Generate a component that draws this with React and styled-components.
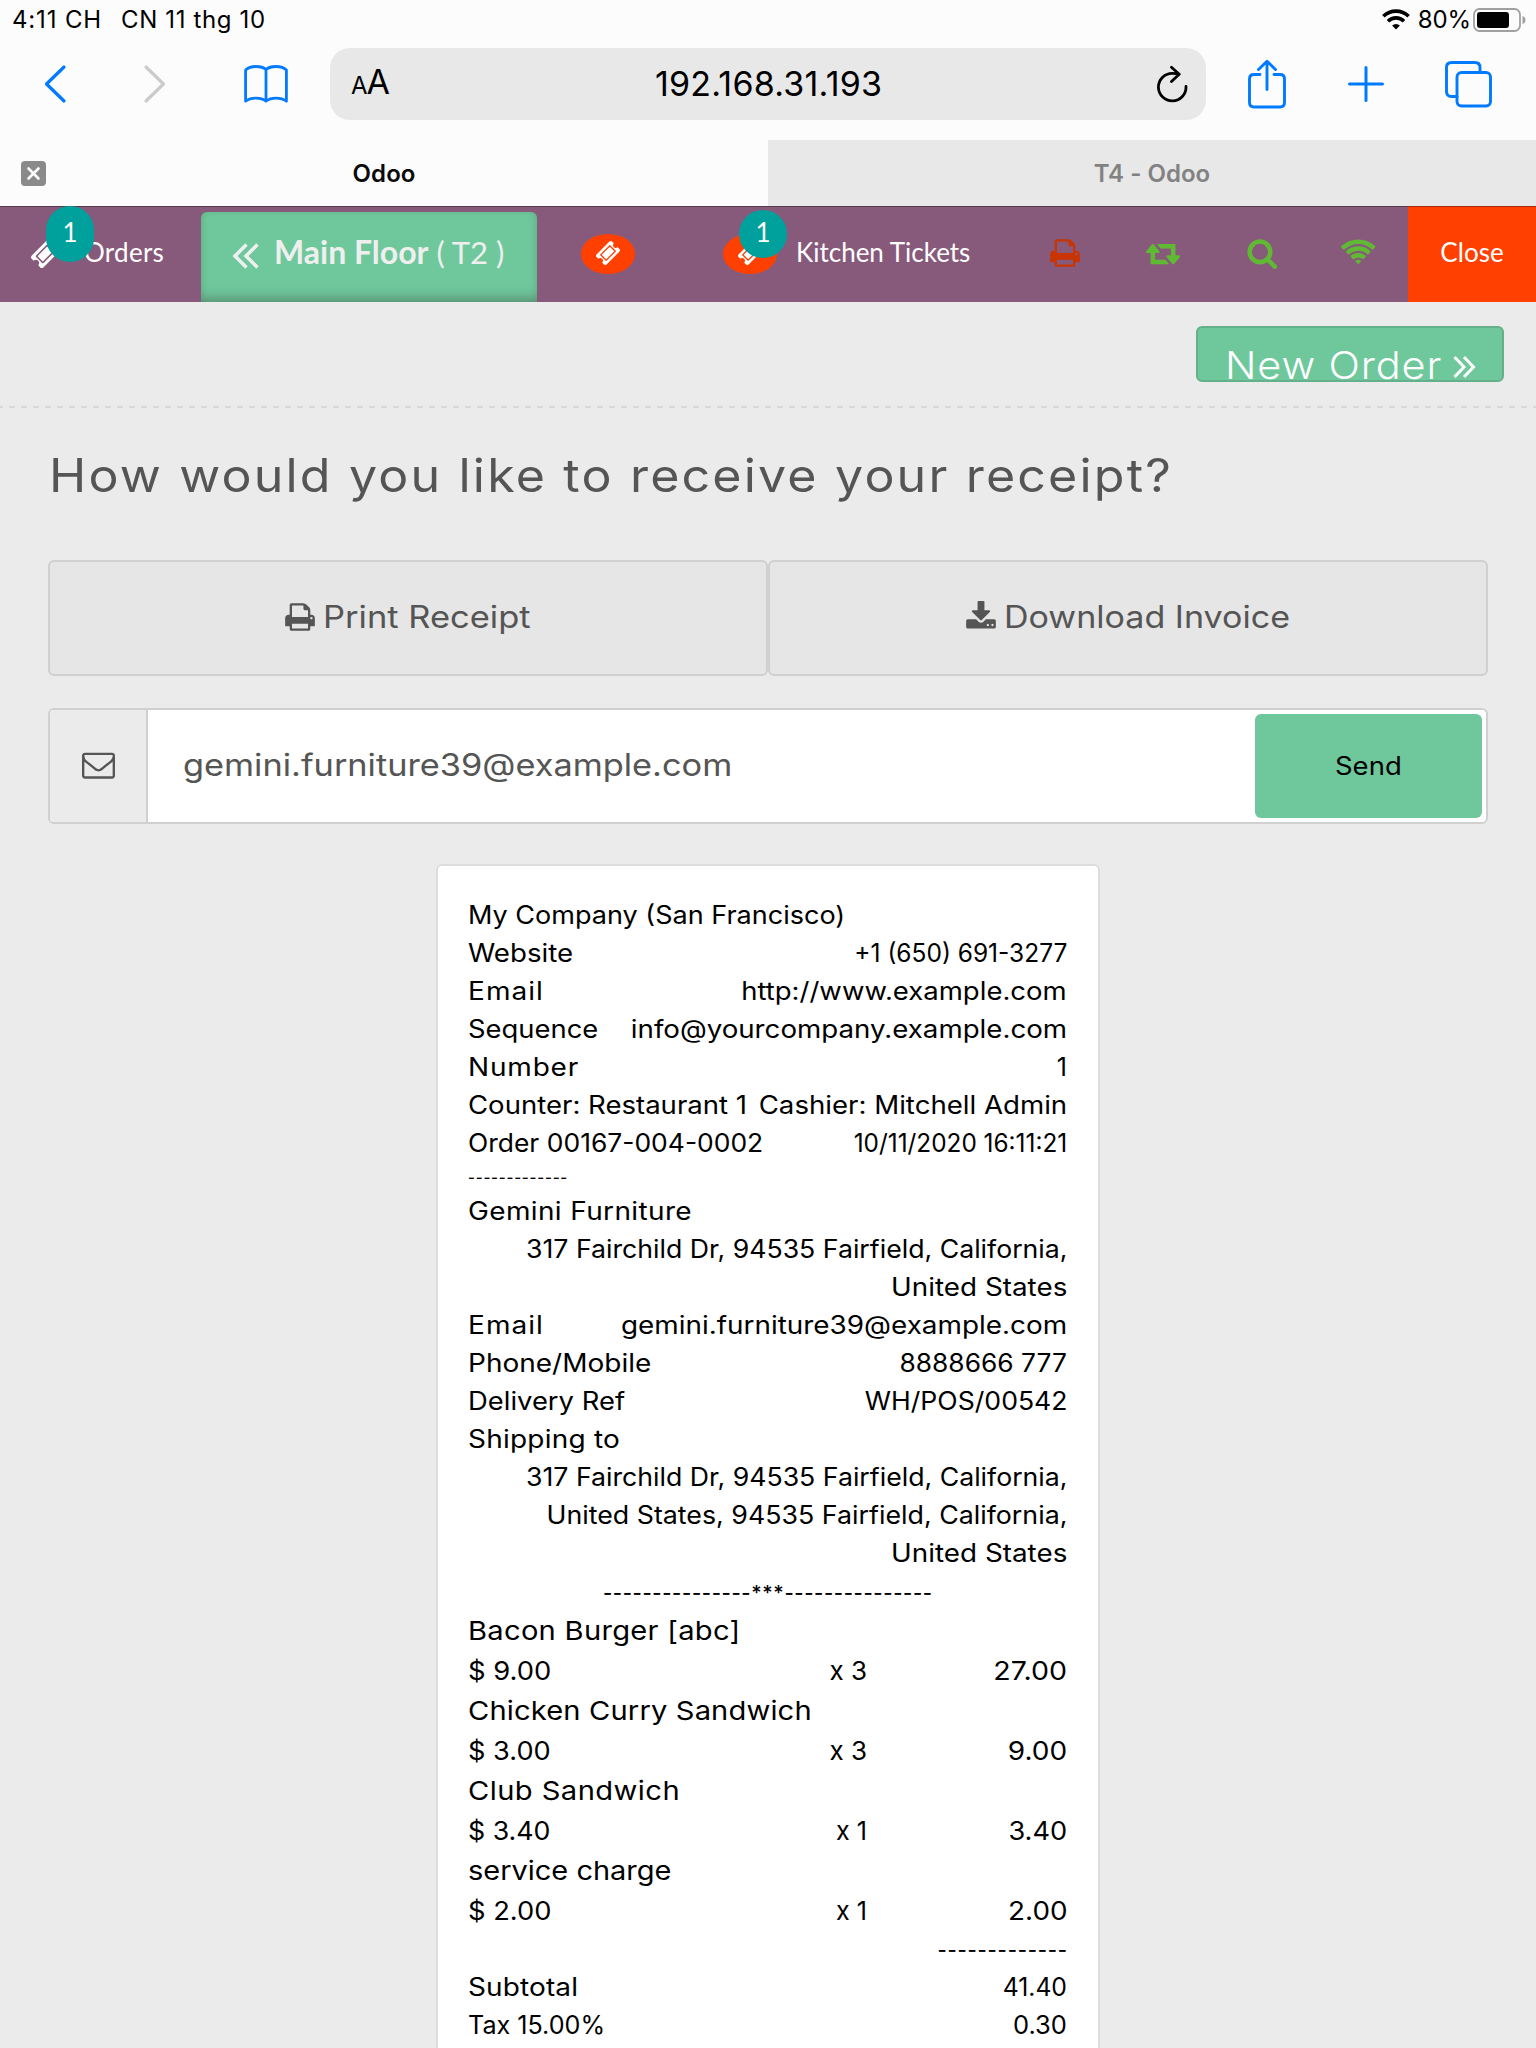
import React from "react";
import styled, { createGlobalStyle } from "styled-components";

const sans = `"Inter", "Liberation Sans", sans-serif`;
const lato = `"Lato", "Liberation Sans", sans-serif`;
const green = "#6fc89c";
const teal = "#00a09d";
const orange = "#ff4000";
const blue = "#007aff";

const GlobalStyle = createGlobalStyle`
  * { box-sizing: border-box; }
  body { margin: 0; background: #ebebeb; font-family: ${sans}; color: #000; }
`;

const Screen = styled.div`
  width: 1536px;
  height: 2048px;
  overflow: hidden;
  display: flex;
  flex-direction: column;
  background: #ebebeb;
`;

/* $sx widens the letter forms, $ls opens the tracking */
const Label = styled.span`
  display: inline-block;
  white-space: pre;
  letter-spacing: ${(p) => p.$ls || 0}px;
  margin-right: ${(p) => (p.$mr || 0) - (p.$ls || 0)}px;
  transform: scaleX(${(p) => p.$sx || 1});
  transform-origin: ${(p) => p.$from || "left"} center;
`;

/* ---------- device and browser chrome ---------- */

const StatusBar = styled.div`
  height: 39px;
  flex: none;
  padding: 0 9px 0 12px;
  display: flex;
  align-items: center;
  font-size: 24px;
  background: #fcfcfc;
`;
const Clock = styled.div`
  width: 109px;
`;
const StatusRight = styled.div`
  margin-left: auto;
  display: flex;
  align-items: center;
`;
const BatteryText = styled.div`
  margin: 0 2px 0 8px;
`;

const BrowserBar = styled.div`
  height: 101px;
  flex: none;
  padding: 9px 0 0 0;
  display: flex;
  align-items: flex-start;
  background: #fcfcfc;
`;
const ToolSlot = styled.div`
  width: ${(p) => p.$w}px;
  height: 72px;
  display: flex;
  align-items: center;
  justify-content: center;
  svg { display: block; overflow: visible; }
`;
const AddressBar = styled.div`
  width: 876px;
  height: 72px;
  padding: 0 17px 0 21px;
  border-radius: 20px;
  background: #e8e8e8;
  display: grid;
  grid-template-columns: 60px 1fr 32px;
  align-items: center;
`;
const ReaderMark = styled.div`
  font-size: 34px;
  line-height: 42px;
  white-space: nowrap;
  letter-spacing: -1px;
  small { font-size: 24px; }
`;
const Url = styled.div`
  font-size: 34px;
  line-height: 40px;
  text-align: center;
  padding-right: 31px;
`;

const TabStrip = styled.div`
  height: 66px;
  flex: none;
  display: grid;
  grid-template-columns: 1fr 1fr;
`;
const Tab = styled.div`
  position: relative;
  display: flex;
  align-items: center;
  justify-content: center;
  font-size: 24px;
  font-weight: 600;
  background: ${(p) => (p.$active ? "#fcfcfc" : "#e8e8e8")};
  color: ${(p) => (p.$active ? "#0a0a0a" : "#828282")};
`;
const TabClose = styled.div`
  position: absolute;
  left: 21px;
  top: 21px;
  width: 25px;
  height: 25px;
  border-radius: 4px;
  background: #8a8a8a;
  svg { display: block; }
`;

/* ---------- point of sale header ---------- */

const NavBar = styled.div`
  height: 96px;
  flex: none;
  display: flex;
  background: #875a7b;
  box-shadow: inset 0 1px 0 rgba(0, 0, 0, 0.35);
  font-family: ${lato};
  font-size: 26px;
  color: #fff;
`;
const OrdersItem = styled.div`
  position: relative;
  width: 201px;
  padding: 0 0 5px 31px;
  display: flex;
  align-items: center;
  gap: 25px;
  svg { margin-top: 4px; }
`;
const Badge = styled.div`
  position: absolute;
  left: ${(p) => p.$x}px;
  top: ${(p) => p.$y}px;
  width: 48px;
  height: ${(p) => p.$h}px;
  border-radius: 24px;
  background: ${teal};
  line-height: ${(p) => p.$lh}px;
  text-align: center;
`;
const FloorButton = styled.div`
  width: 336px;
  height: 90px;
  margin-top: 6px;
  padding: 0 0 11px 31px;
  border-radius: 6px 6px 0 0;
  background: ${green};
  box-shadow: inset 0 -10px 14px -7px rgba(60, 60, 60, 0.42),
    inset 0 0 6px rgba(60, 80, 60, 0.14);
  display: flex;
  align-items: center;
  color: #efefef;
  svg { margin: 8px 14px 0 0; flex: none; }
`;
const FloorName = styled.div`
  font-size: 32px;
  font-weight: 700;
  white-space: nowrap;
`;
const TableName = styled.div`
  margin-left: 8px;
  font-size: 31px;
  white-space: nowrap;
`;
const TicketItem = styled.div`
  position: relative;
  display: flex;
  align-items: center;
  margin-left: ${(p) => p.$ml}px;
  gap: 19px;
  padding-bottom: 5px;
`;
const Oval = styled.div`
  width: 54px;
  height: 40px;
  margin-top: 5px;
  border-radius: 50%;
  background: ${orange};
  display: flex;
  align-items: center;
  justify-content: center;
  svg { margin-top: -2px; }
`;
const IconRow = styled.div`
  margin-left: auto;
  display: flex;
`;
const IconCell = styled.div`
  width: 98px;
  padding-bottom: 3px;
  display: flex;
  align-items: center;
  justify-content: center;
  color: ${(p) => p.$color};
`;
const CloseButton = styled.div`
  width: 128px;
  padding-bottom: 5px;
  display: flex;
  align-items: center;
  justify-content: center;
  background: ${orange};
  box-shadow: inset 0 1px 0 rgba(0, 0, 0, 0.35);
`;

/* ---------- receipt screen ---------- */

const OrderBar = styled.div`
  height: 106px;
  flex: none;
  padding: 24px 32px 0 0;
  display: flex;
  justify-content: flex-end;
  align-items: flex-start;
  background: repeating-linear-gradient(90deg, #d8d8d8 0 6px, transparent 6px 12px) -3px 104px / 1560px 2px no-repeat;
`;
const NewOrder = styled.div`
  width: 308px;
  height: 56px;
  padding: 23px 0 0 27px;
  border: 2px solid #63b08a;
  border-radius: 6px;
  background: ${green};
  display: flex;
  align-items: flex-start;
  font-size: 38px;
  font-weight: 300;
  line-height: 29px;
  color: #fff;
  svg { margin: 4px 0 0 29px; }
`;
const Title = styled.h1`
  margin: 36px 0 0 49px;
  height: 116px;
  flex: none;
  font-size: 46px;
  line-height: 62px;
  font-weight: 400;
  color: #555;
`;
const Actions = styled.div`
  flex: none;
  margin: 0 48px;
  height: 116px;
  display: grid;
  grid-template-columns: 1fr 1fr;
`;
const ActionButton = styled.div`
  border: 2px solid #d0d0d0;
  border-radius: 6px;
  background: #e6e6e6;
  display: flex;
  align-items: center;
  justify-content: center;
  padding: 0 1px 3px 0;
  gap: 7px;
  font-size: 31px;
  color: #555;
`;
const EmailBox = styled.div`
  flex: none;
  height: 116px;
  margin: 32px 48px 0;
  border: 2px solid #d0d0d0;
  border-radius: 6px;
  background: #fff;
  overflow: hidden;
  display: flex;
`;
const EmailIcon = styled.div`
  width: 98px;
  border-right: 2px solid #d0d0d0;
  background: #ebebeb;
  color: #555;
  display: flex;
  align-items: center;
  justify-content: center;
  padding-bottom: 3px;
`;
const EmailValue = styled.div`
  flex: 1;
  padding: 0 0 3px 35px;
  display: flex;
  align-items: center;
  font-size: 31px;
  color: #555;
`;
const SendButton = styled.div`
  width: 227px;
  height: 104px;
  margin: 4px 4px 0 0;
  border-radius: 6px;
  background: ${green};
  display: flex;
  align-items: center;
  justify-content: center;
  font-size: 25px;
`;

const Receipt = styled.div`
  flex: none;
  width: 664px;
  height: 1300px;
  margin: 40px auto 0;
  padding: 30px 31px 30px 30px;
  border: 2px solid #ddd;
  border-radius: 6px;
  background: #fff;
  font-size: 25px;
  line-height: 38px;
`;
const Row = styled.div`
  height: 38px;
  display: flex;
  justify-content: ${(p) => (p.$end ? "flex-end" : "space-between")};
`;
const Rule = styled.div`
  height: ${(p) => p.$h}px;
  display: flex;
  justify-content: ${(p) => p.$align};
  align-items: center;
  padding-top: ${(p) => p.$pt || 0}px;
  font-size: ${(p) => p.$size}px;
  font-weight: 500;
`;
const Product = styled.div`
  height: 80px;
  font-size: 26px;
  line-height: 40px;
`;
const ProductLine = styled.div`
  height: 40px;
`;
const ProductPrice = styled.div`
  height: 40px;
  display: grid;
  grid-template-columns: 200px 199px 200px;
`;
const Cell = styled.div`
  text-align: ${(p) => p.$align || "left"};
`;

/* ---------- icons ---------- */

const shapes = {
  print: ["0 0 1792 1792", "M448 1536h896v-256h-896v256zm0-640h896v-384h-160q-40 0-68-28t-28-68v-160h-640v640zm1152 64q0-26-19-45t-45-19-45 19-19 45 19 45 45 19 45-19 19-45zm128 0v416q0 13-9.5 22.5t-22.5 9.5h-224v160q0 40-28 68t-68 28h-960q-40 0-68-28t-28-68v-160h-224q-13 0-22.5-9.5t-9.5-22.5v-416q0-79 56.5-135.5t135.5-56.5h64v-544q0-40 28-68t68-28h672q40 0 88 20t76 48l152 152q28 28 48 76t20 88v256h64q79 0 135.5 56.5t56.5 135.5z"],
  download: ["0 0 1792 1792", "M1344 1344q0-26-19-45t-45-19-45 19-19 45 19 45 45 19 45-19 19-45zm256 0q0-26-19-45t-45-19-45 19-19 45 19 45 45 19 45-19 19-45zm128-224v320q0 40-28 68t-68 28h-1472q-40 0-68-28t-28-68v-320q0-40 28-68t68-28h465l135 136q58 56 136 56t136-56l136-136h464q40 0 68 28t28 68zm-325-569q17 41-14 70l-448 448q-18 19-45 19t-45-19l-448-448q-31-29-14-70 17-39 59-39h256v-448q0-26 19-45t45-19h256q26 0 45 19t19 45v448h256q42 0 59 39z"],
  search: ["-70 0 1792 1792", "M1216 832q0-185-131.5-316.5t-316.5-131.5-316.5 131.5-131.5 316.5 131.5 316.5 316.5 131.5 316.5-131.5 131.5-316.5zm512 832q0 52-38 90t-90 38q-54 0-90-38l-343-342q-179 124-399 124-143 0-273.5-55.5t-225-150-150-225-55.5-273.5 55.5-273.5 150-225 225-150 273.5-55.5 273.5 55.5 225 150 150 225 55.5 273.5q0 220-124 399l343 343q37 37 37 90z"],
  retweet: ["0 0 1920 1792", "M1280 1504q0 13-9.5 22.5t-22.5 9.5h-960q-8 0-13.5-2t-9-7-5.5-8-3-11.5-1-11.5v-600h-192q-26 0-45-19t-19-45q0-24 15-41l320-384q19-22 49-22t49 22l320 384q15 17 15 41 0 26-19 45t-45 19h-192v384h576q16 0 25 11l160 192q7 10 7 21zm640-416q0 24-15 41l-320 384q-20 23-49 23t-49-23l-320-384q-15-17-15-41 0-26 19-45t45-19h192v-384h-576q-16 0-25-12l-160-192q-7-9-7-20 0-13 9.5-22.5t22.5-9.5h960q8 0 13.5 2t9 7 5.5 8 3 11.5 1 11.5v600h192q26 0 45 19t19 45z"],
  wifi: ["140 10 2048 1792", "M1120 1533q-20 0-93-73.5t-73-93.5q0-32 62.5-54t103.5-22 103.5 22 62.5 54q0 20-73 93.5t-93 73.5zm270-271q-2 0-40-25t-101.5-50-128.5-25-128.5 25-101 50-40.5 25q-18 0-93.5-75t-75.5-93q0-13 10-23 78-77 196-121t233-44 233 44 196 121q10 10 10 23 0 18-75.5 93t-93.5 75zm273-272q-11 0-23-8-136-105-252-154.5t-268-49.5q-85 0-170.5 22t-149 53-113.5 62-79 53-31 22q-17 0-92-75t-75-93q0-12 10-22 132-132 320-205t380-73 380 73 320 205q10 10 10 22 0 18-75 93t-92 75zm271-271q-11 0-22-9-179-157-371.5-236.5t-420.5-79.5-420.5 79.5-371.5 236.5q-11 9-22 9-17 0-92.5-75t-75.5-93q0-13 10-23 187-186 445-288t527-102 527 102 445 288q10 10 10 23 0 18-75.5 93t-92.5 75z"],
  ticket: ["54 54 1684 1684", "M1024 452l316 316-572 572-316-316zm-211 979l618-618q19-19 19-45t-19-45l-362-362q-18-18-45-18t-45 18l-618 618q-19 19-19 45t19 45l362 362q18 18 45 18t45-18zm889-637l-907 908q-37 37-90.5 37t-90.5-37l-126-126q56-56 56-136t-56-136-136-56-136 56l-125-126q-37-37-37-90.5t37-90.5l907-906q37-37 90.5-37t90.5 37l125 125q-56 56-56 136t56 136 136 56 136-56l126 125q37 37 37 90.5t-37 90.5z"],
  envelope: ["0 0 1792 1792", "M1664 1504v-768q-32 36-69 66-268 206-426 338-51 43-83 67t-86.5 48.5-102.5 24.5h-2q-48 0-102.5-24.5t-86.5-48.5-83-67q-158-132-426-338-37-30-69-66v768q0 13 9.5 22.5t22.5 9.5h1472q13 0 22.5-9.5t9.5-22.5zm0-1051v-24.5l-.5-13-3-12.5-5.5-9-9-7.5-14-2.5h-1472q-13 0-22.5 9.5t-9.5 22.5q0 168 147 284 193 152 401 317 6 5 35 29.5t46 37.5 44.5 31.5 50.5 27.5 43 9h2q20 0 43-9t50.5-27.5 44.5-31.5 46-37.5 35-29.5q208-165 401-317 54-43 100.5-115.5t46.5-131.5zm128-37v1088q0 66-47 113t-113 47h-1472q-66 0-113-47t-47-113v-1088q0-66 47-113t113-47h1472q66 0 113 47t47 113z"],
};

const Icon = ({ name, w = 32, h = 32 }) => (
  <svg width={w} height={h} viewBox={shapes[name][0]} fill="currentColor">
    <path d={shapes[name][1]} />
  </svg>
);

const Line = ({ w, h, color = blue, sw = 3, children }) => (
  <svg width={w} height={h} viewBox={`0 0 ${w} ${h}`} fill="none" stroke={color} strokeWidth={sw} strokeLinecap="round" strokeLinejoin="round">
    {children}
  </svg>
);

const StatusWifi = () => (
  <svg width="28" height="21" viewBox="0 0 28 21" fill="none" stroke="#000" strokeWidth="3.6">
    <path d="M1.4 7.3a18 18 0 0 1 25.2 0" />
    <path d="M6 12.2a11.4 11.4 0 0 1 16 0" />
    <path d="M14 20.6l-3.900-4.100a5.600 5.600 0 0 1 7.800 0z" fill="#000" stroke="none" />
  </svg>
);

const Battery = () => (
  <svg width="54" height="24" viewBox="0 0 54 24">
    <rect x="1" y="1" width="46" height="22" rx="5.5" fill="none" stroke="#a0a0a0" strokeWidth="1.8" />
    <rect x="4" y="4" width="32" height="16" rx="3" fill="#000" />
    <path d="M49.5 8q3 1 3 4t-3 4z" fill="#a0a0a0" />
  </svg>
);

/* ---------- data ---------- */

const companyRows = [
  [{ t: "My Company (San Francisco)", sx: 1.081 }],
  [{ t: "Website", sx: 1.107 }, { t: "+1 (650) 691-3277", sx: 0.98 }],
  [{ t: "Email", sx: 1.12, ls: 0.94 }, { t: "http://www.example.com", sx: 1.101 }],
  [{ t: "Sequence", sx: 1.096 }, { t: "info@yourcompany.example.com", sx: 1.107 }],
  [{ t: "Number", sx: 1.12, ls: 0.73 }, { t: "1" }],
  [{ t: "Counter: Restaurant 1", sx: 1.102 }, { t: "Cashier: Mitchell Admin", sx: 1.105 }],
  [{ t: "Order 00167-004-0002", sx: 1.058 }, { t: "10/11/2020 16:11:21", sx: 0.974 }],
];
const customerRows = [
  [{ t: "Gemini Furniture", sx: 1.12, ls: 0.32 }],
  [null, { t: "317 Fairchild Dr, 94535 Fairfield, California,", sx: 1.067 }],
  [null, { t: "United States", sx: 1.113 }],
  [{ t: "Email", sx: 1.12, ls: 0.94 }, { t: "gemini.furniture39@example.com", sx: 1.115 }],
  [{ t: "Phone/Mobile", sx: 1.12 }, { t: "8888666 777", sx: 1.054 }],
  [{ t: "Delivery Ref", sx: 1.096 }, { t: "WH/POS/00542", sx: 1.064 }],
  [{ t: "Shipping to", sx: 1.12, ls: 0.2 }],
  [null, { t: "317 Fairchild Dr, 94535 Fairfield, California,", sx: 1.067 }],
  [null, { t: "United States, 94535 Fairfield, California,", sx: 1.071 }],
  [null, { t: "United States", sx: 1.113 }],
];
const products = [
  [{ t: "Bacon Burger [abc]", sx: 1.12, ls: 0.25 }, { t: "$ 9.00", sx: 1.053 }, { t: "x 3" }, { t: "27.00", sx: 1.099 }],
  [{ t: "Chicken Curry Sandwich", sx: 1.12, ls: 0.13 }, { t: "$ 3.00", sx: 1.045 }, { t: "x 3" }, { t: "9.00", sx: 1.076 }],
  [{ t: "Club Sandwich", sx: 1.12, ls: 0.39 }, { t: "$ 3.40", sx: 1.028 }, { t: "x 1", sx: 0.967 }, { t: "3.40", sx: 1.046 }],
  [{ t: "service charge", sx: 1.114 }, { t: "$ 2.00", sx: 1.05 }, { t: "x 1", sx: 0.967 }, { t: "2.00", sx: 1.07 }],
];
const totals = [
  [{ t: "Subtotal", sx: 1.12, ls: 0.1 }, { t: "41.40", sx: 0.989 }],
  [{ t: "Tax 15.00%", sx: 1.005 }, { t: "0.30", sx: 1.02 }],
];

const Text = ({ item, from }) => (
  <Label $sx={item.sx} $ls={item.ls} $from={from}>{item.t}</Label>
);

const InfoRow = ({ row: [left, right] }) => (
  <Row $end={!left}>
    {left && <Text item={left} />}
    {right && <Text item={right} from="right" />}
  </Row>
);

export default function App() {
  return (
    <Screen>
      <GlobalStyle />
      <StatusBar>
        <Clock><Label $ls={0.85}>4:11 CH</Label></Clock>
        <Label $ls={0.64}>CN 11 thg 10</Label>
        <StatusRight>
          <StatusWifi />
          <BatteryText><Label $ls={-0.14}>80%</Label></BatteryText>
          <Battery />
        </StatusRight>
      </StatusBar>

      <BrowserBar>
        <ToolSlot $w={109}>
          <Line w={22} h={38} sw={3.2}><path d="M20 2L2.500 19l17.500 17" /></Line>
        </ToolSlot>
        <ToolSlot $w={91}>
          <Line w={22} h={38} sw={3.2} color="#cbcbcb"><path d="M2 2l17.500 17L2 36" /></Line>
        </ToolSlot>
        <ToolSlot $w={130}>
          <Line w={42} h={38} sw={2.8}>
            <path d="M22 4.500C17 .400 6.500 .400 1.600 5v31.200c5.400-4.200 15.400-4.200 20.400 0 5-4.200 15-4.200 20.400 0V5C37.500 .400 27 .400 22 4.500zM22 4.500v31.700" />
          </Line>
        </ToolSlot>
        <AddressBar>
          <ReaderMark><small>A</small>A</ReaderMark>
          <Url><Label $ls={0.22}>192.168.31.193</Label></Url>
          <Line w={32} h={38} color="#000" sw={2.8}>
            <path d="M29 21.500a13.800 13.800 0 1 1-13.800-13.200q4 0 7 .700M14.500 2.200l7.700 7-7.700 7.400" />
          </Line>
        </AddressBar>
        <ToolSlot $w={122}>
          <Line w={38} h={48} sw={2.9}>
            <path d="M12 14.500H6q-4.500 0-4.500 4.500v23.500Q1.500 47 6 47h26q4.500 0 4.500-4.500V19q0-4.500-4.500-4.500h-6M19 29.500V1.500M10.500 9.500L19 1.200l8.500 8.300" />
          </Line>
        </ToolSlot>
        <ToolSlot $w={75}>
          <Line w={36} h={36}><path d="M18 1.500v33M1.500 18h33" /></Line>
        </ToolSlot>
        <ToolSlot $w={131}>
          <Line w={47} h={46} sw={2.9}>
            <rect x="12" y="11.500" width="33.500" height="33.500" rx="4.500" />
            <path d="M12 35.500H6.500q-5 0-5-5v-24q0-5 5-5H30q5 0 5 5v5" />
          </Line>
        </ToolSlot>
      </BrowserBar>

      <TabStrip>
        <Tab $active>
          <TabClose>
            <Line w={25} h={25} color="#fff" sw={2.6}><path d="M7.500 7.500l10 10M17.500 7.500l-10 10" /></Line>
          </TabClose>
          <Label $ls={0.09}>Odoo</Label>
        </Tab>
        <Tab>
          <Label $ls={0.03}>T4 - Odoo</Label>
        </Tab>
      </TabStrip>

      <NavBar>
        <OrdersItem>
          <Icon name="ticket" w={28} h={28} />
          <Label $ls={0.28}>Orders</Label>
          <Badge $x={46} $y={0} $h={56} $lh={53}>1</Badge>
        </OrdersItem>
        <FloorButton>
          <Line w={28} h={28} color="#efefef" sw={3.6}>
            <path d="M14.500 2.500L3 14l11.500 11.500M25.500 2.500L14 14l11.500 11.500" strokeLinecap="butt" strokeLinejoin="miter" />
          </Line>
          <FloorName>Main Floor</FloorName>
          <TableName>( T2 )</TableName>
        </FloorButton>
        <TicketItem $ml={44}>
          <Oval><Icon name="ticket" w={24} h={24} /></Oval>
        </TicketItem>
        <TicketItem $ml={88}>
          <Oval><Icon name="ticket" w={24} h={24} /></Oval>
          <Label>Kitchen Tickets</Label>
          <Badge $x={16} $y={4} $h={48} $lh={45}>1</Badge>
        </TicketItem>
        <IconRow>
          <IconCell $color="#c93400"><Icon name="print" /></IconCell>
          <IconCell $color="#5fb933"><Icon name="retweet" w={34} /></IconCell>
          <IconCell $color="#5fb933"><Icon name="search" /></IconCell>
          <IconCell $color="#5fb933"><Icon name="wifi" w={36} /></IconCell>
        </IconRow>
        <CloseButton><Label $ls={0.1}>Close</Label></CloseButton>
      </NavBar>

      <OrderBar>
        <NewOrder>
          <Label $sx={1.09} $ls={0.77}>New Order</Label>
          <Line w={24} h={24} color="#fff" sw={3}>
            <path d="M2.500 2L12 12l-9.500 10M12 2l9.500 10L12 22" strokeLinecap="butt" strokeLinejoin="miter" />
          </Line>
        </NewOrder>
      </OrderBar>

      <Title><Label $sx={1.09} $ls={1.98}>How would you like to receive your receipt?</Label></Title>

      <Actions>
        <ActionButton>
          <Icon name="print" />
          <Label $sx={1.112} $mr={21}>Print Receipt</Label>
        </ActionButton>
        <ActionButton>
          <Icon name="download" />
          <Label $sx={1.098} $mr={25}>Download Invoice</Label>
        </ActionButton>
      </Actions>

      <EmailBox>
        <EmailIcon><Icon name="envelope" w={33} h={33} /></EmailIcon>
        <EmailValue><Label $sx={1.107}>gemini.furniture39@example.com</Label></EmailValue>
        <SendButton><Label $sx={1.1} $from="center">Send</Label></SendButton>
      </EmailBox>

      <Receipt>
        {companyRows.map((row, i) => <InfoRow key={i} row={row} />)}
        <Rule $h={30} $size={15} $align="flex-start" $pt={2}>
          <Label $ls={0.76}>-------------</Label>
        </Rule>
        {customerRows.map((row, i) => <InfoRow key={i} row={row} />)}
        <Rule $h={39} $size={20} $align="center" $pt={2}>
          <Label $ls={0.64}>---------------***---------------</Label>
        </Rule>
        {products.map(([name, price, qty, sum]) => (
          <Product key={name.t}>
            <ProductLine><Text item={name} /></ProductLine>
            <ProductPrice>
              <Cell><Text item={price} /></Cell>
              <Cell $align="right"><Text item={qty} from="right" /></Cell>
              <Cell $align="right"><Text item={sum} from="right" /></Cell>
            </ProductPrice>
          </Product>
        ))}
        <Rule $h={37} $size={20} $align="flex-end" $pt={1}>
          <Label $ls={0.77}>-------------</Label>
        </Rule>
        {totals.map((row, i) => <InfoRow key={i} row={row} />)}
      </Receipt>
    </Screen>
  );
}
